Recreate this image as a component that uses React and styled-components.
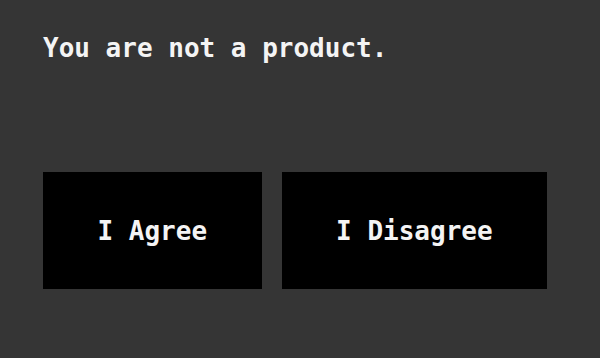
import styled, { createGlobalStyle } from 'styled-components';

const GlobalStyle = createGlobalStyle`
  html, body {
    margin: 0;
    padding: 0;
    background: #353535;
  }
  body {
    font-family: "DejaVu Sans Mono", "Liberation Mono", monospace;
    color: #f4f4f4;
  }
`;

const Page = styled.main`
  width: 600px;
  height: 358px;
  box-sizing: border-box;
  padding: 32px 43px 0;
  display: flex;
  flex-direction: column;
  background: #353535;
`;

const Title = styled.h1`
  margin: 0;
  font-size: 26px;
  line-height: 32px;
  font-weight: bold;
`;

const Actions = styled.div`
  display: flex;
  gap: 20px;
  margin-top: 108px;
`;

const Choice = styled.button`
  height: 117px;
  padding: 0 54.5px;
  border: none;
  background: #000;
  color: #f4f4f4;
  font-family: inherit;
  font-size: 26px;
  font-weight: bold;
  cursor: pointer;
`;

const App = () => (
  <>
    <GlobalStyle />
    <Page>
      <Title>You are not a product.</Title>
      <Actions>
        <Choice>I Agree</Choice>
        <Choice>I Disagree</Choice>
      </Actions>
    </Page>
  </>
);

export default App;
